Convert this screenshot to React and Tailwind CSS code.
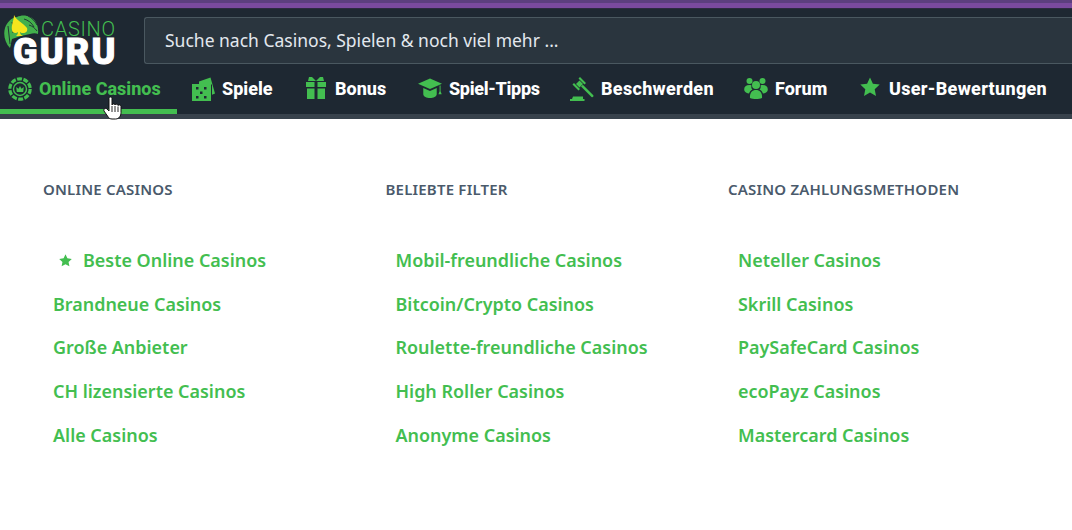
const Chip = () => (
  <svg width="24" height="24" viewBox="0 0 24 24" fill="none" stroke="#43be50">
    <circle cx="12" cy="12" r="10.200" strokeWidth="3.200" strokeDasharray="5 1.400" />
    <circle cx="12" cy="12" r="7" strokeWidth="1.300" stroke="#1e2833" />
    <circle cx="12" cy="12" r="6.500" strokeWidth="1.400" />
    <path d="M8.800 15 8.200 10l2.300 1.700L12 9l1.500 2.700L15.800 10l-.6 5z" fill="#43be50" stroke="none" />
  </svg>
);

const Dice = () => (
  <svg width="24" height="24" viewBox="0 0 24 24">
    <path d="M8 4.500 19.500 .5 24 16.500l-3 1.200V7.500H8z" fill="#43be50" />
    <path d="M1 7h19v18H1z" fill="#43be50" />
    <g fill="#1e2833">
      <rect x="5" y="10" width="2.500" height="2.500" /><rect x="13" y="10" width="2.500" height="2.500" />
      <rect x="9" y="14.500" width="2.500" height="2.500" />
      <rect x="5" y="19" width="2.500" height="2.500" /><rect x="13" y="19" width="2.500" height="2.500" />
    </g>
  </svg>
);

const Gift = () => (
  <svg width="20" height="22" viewBox="0 0 20 22" fill="#43be50">
    <path d="M0 5h8.500v5H0zM11.500 5H20v5h-8.500zM1 11.500h7.500V22H1zM11.500 11.500H19V22h-7.500z" />
    <path d="M3 0h3l4 4 4-4h3l1 4H2z" />
  </svg>
);

const Cap = () => (
  <svg width="25" height="22" viewBox="0 0 25 22" fill="#43be50">
    <path d="M12.500 1 25 6.500 12.500 12 0 6.500z" />
    <path d="M5.500 11 12.500 14l7-3v6.500c0 2.500-3.500 4-7 4s-7-1.500-7-4z" />
    <path d="M22.500 8.500h1v6l1.200 3h-3.400l1.200-3z" />
  </svg>
);

const Gavel = () => (
  <svg width="24" height="24" viewBox="0 0 24 24" fill="#43be50">
    <path d="M8.500 1.500 10 0l6 6-1.500 1.500zM2.500 7.500 4 6l6 6-1.500 1.500z" />
    <path d="M9.500 3.500 13 7l-3.500 3.500L6 7z" />
    <path d="m11 9.500 1.800-1.800 10.500 10.500a1.300 1.300 0 0 1-1.800 1.800z" />
    <path d="M3 19.500h10V22h1.500v2H0v-2h2z" />
  </svg>
);

const Users = () => (
  <svg width="24" height="22" viewBox="0 0 24 22" fill="#43be50">
    <circle cx="5.500" cy="4" r="3" /><circle cx="18.500" cy="4" r="3" /><circle cx="12" cy="8" r="4" />
    <path d="M6 21c-.5-5 2-8 6-8s6.500 3 6 8c-3 1.300-9 1.300-12 0z" />
    <path d="M.500 14c-1-3 .5-6 5-6 .5 0 1.500 0 2 .5-.5 2 0 3 1 4-2 1-3 2.500-3.500 4-2 0-3.500-1-4.500-2.500zM23.500 14c1-3-.5-6-5-6-.5 0-1.500 0-2 .5.500 2 0 3-1 4 2 1 3 2.500 3.500 4 2 0 3.500-1 4.500-2.500z" />
  </svg>
);

const Star = ({ size = 20 }) => (
  <svg width={size} height={size} viewBox="0 0 20 20" fill="#43be50">
    <path d="m10 .5 2.900 6.200 6.800.8-5 4.700 1.300 6.800-6-3.400-6 3.400 1.300-6.800-5-4.700 6.800-.8z" />
  </svg>
);

// leaves + spade sit behind the wordmark
const Logo = () => (
  <div className="relative w-[116px] h-[56px] shrink-0">
    <svg className="absolute left-[1px] top-[4px]" width="35" height="34" viewBox="0 0 35 34">
      <path d="M6 33C1 28-1 20 1 13 3 7 7 3 13 2c4-2 9-2 13 0 5 2 9 8 8 17-2-1-5-1-8 0l-9 2-9 3c-1 3-1 6-2 9z" fill="#43b04c" />
      <path d="M4 11c1 6 1 12 2 18M8 7c1 3 1 7 1 11M20 4c4 1 8 4 10 8M24 1c4 2 7 5 9 9M25 10c3 1 6 3 8 6" stroke="#1e2833" strokeWidth=".9" fill="none" />
      <path d="M10 0c2 5 9 8 13 13 1 3-1 5-4 5-1 0-2 0-3-1 0 2 1 3 3 4H12c1-1 2-2 2-4-2 2-6 1-6-2-1-5 2-10 2-15z" fill="#f5e61c" />
    </svg>
    <span className="absolute left-[38px] top-[10px] text-[20px] leading-[16px] text-[#43be50] tracking-[0.7px] font-light font-['Roboto',sans-serif]">CASINO</span>
    <span className="absolute left-[10px] top-[28px] text-[36px] leading-[26px] font-black text-white tracking-[2.200px] [-webkit-text-stroke:1px_white] font-['Roboto',sans-serif]">GURU</span>
  </div>
);

const navItems = [
  { label: "Online Casinos", icon: <Chip />, active: true, w: "w-[177px]", pl: "pl-[8px]" },
  { label: "Spiele", icon: <Dice />, w: "w-[112px]", pl: "pl-[14px]" },
  { label: "Bonus", icon: <Gift />, w: "w-[115px]", pl: "pl-[15px]" },
  { label: "Spiel-Tipps", icon: <Cap />, w: "w-[151px]", pl: "pl-[14px]", ls: "tracking-[-0.3px]" },
  { label: "Beschwerden", icon: <Gavel />, w: "w-[175px]", pl: "pl-[15px]", ls: "tracking-[0.3px]" },
  { label: "Forum", icon: <Users />, w: "w-[115px]", pl: "pl-[14px]" },
  { label: "User-Bewertungen", icon: <Star />, w: "w-[227px]", pl: "pl-[13px]", ls: "tracking-[0.3px]" },
];

const columns = [
  {
    title: "ONLINE CASINOS",
    w: "w-[342.500px]",
    links: ["Beste Online Casinos", "Brandneue Casinos", "Große Anbieter", "CH lizensierte Casinos", "Alle Casinos"],
    star: true,
  },
  {
    title: "BELIEBTE FILTER",
    w: "w-[342.500px]",
    links: ["Mobil-freundliche Casinos", "Bitcoin/Crypto Casinos", "Roulette-freundliche Casinos", "High Roller Casinos", "Anonyme Casinos"],
  },
  {
    title: "CASINO ZAHLUNGSMETHODEN",
    w: "w-[300px]",
    links: ["Neteller Casinos", "Skrill Casinos", "PaySafeCard Casinos", "ecoPayz Casinos", "Mastercard Casinos"],
  },
];

const Cursor = () => (
  <svg className="absolute left-[103px] top-[96px]" width="19" height="24" viewBox="0 0 19 24">
    <path d="M6 2.500c0-2 3-2 3 0V9c.5-1.500 3-1.500 3 0 .5-1.300 3-1 3 .5.500-1 3-.8 3 1v6c0 3.500-2 6.500-5.500 6.500H9c-2 0-3.500-1-4.500-3L1 15c-.8-2 1.500-3.500 3-2l2 2z" fill="#fff" stroke="#111" strokeWidth="1" />
    <path d="M9 10v6M12 10v6M15 10.500v5.500" stroke="#111" strokeWidth=".9" />
  </svg>
);

export default function App() {
  return (
    <div className="relative w-[1072px] h-[530px] overflow-hidden bg-white font-['Noto_Sans',sans-serif]">
      <div className="h-[9px] bg-[#7a4a9e] border-t-[3px] border-t-[#5c3f7e] border-b border-b-[#2c2a40]" />
      <header className="bg-[#1e2832]">
        <div className="flex h-[57px] items-start pl-[3px] pt-[2px]">
          <Logo />
          <div className="ml-[25px] mt-[6px] h-[47px] flex-1 flex items-center pl-[20px] bg-[#2a353e] border border-[#4a5860] border-r-0 rounded-l-[3px] text-[17.500px] text-[#e3e8ee]">
            Suche nach Casinos, Spielen &amp; noch viel mehr ...
          </div>
        </div>
        <nav className="flex h-[48px] font-['Roboto',sans-serif] text-[18px] font-extrabold">
          {navItems.map((item) => (
            <div key={item.label} className={`${item.w} ${item.pl} shrink-0 flex items-start pt-[11px] gap-[7px] h-[48px] ${item.active ? "border-b-[5px] border-[#43be50] text-[#43be50]" : "text-white"}`}>
              <span className="w-[24px] flex justify-center">{item.icon}</span>
              <span className={`leading-[24px] whitespace-nowrap ${item.ls || ""}`}>{item.label}</span>
            </div>
          ))}
        </nav>
        <div className="h-[5px] bg-[#38424c]" />
      </header>
      <main className="flex pl-[43px] pt-[60px]">
        {columns.map((col) => (
          <div key={col.title} className={`${col.w} shrink-0`}>
            <h3 className="text-[15px] leading-[20px] font-semibold tracking-[0.2px] text-[#4a5a6b]">{col.title}</h3>
            <ul className="mt-[39.700px] pl-[10px]">
              {col.links.map((link, i) => (
                <li key={link} className={`h-[43.700px] flex items-center text-[17.950px] [font-weight:650] text-[#43be50] whitespace-nowrap ${col.star && i === 0 ? "pl-[6px] gap-[11px]" : ""}`}>
                  {col.star && i === 0 && <Star size={13} />}
                  {link}
                </li>
              ))}
            </ul>
          </div>
        ))}
      </main>
      <Cursor />
    </div>
  );
}
